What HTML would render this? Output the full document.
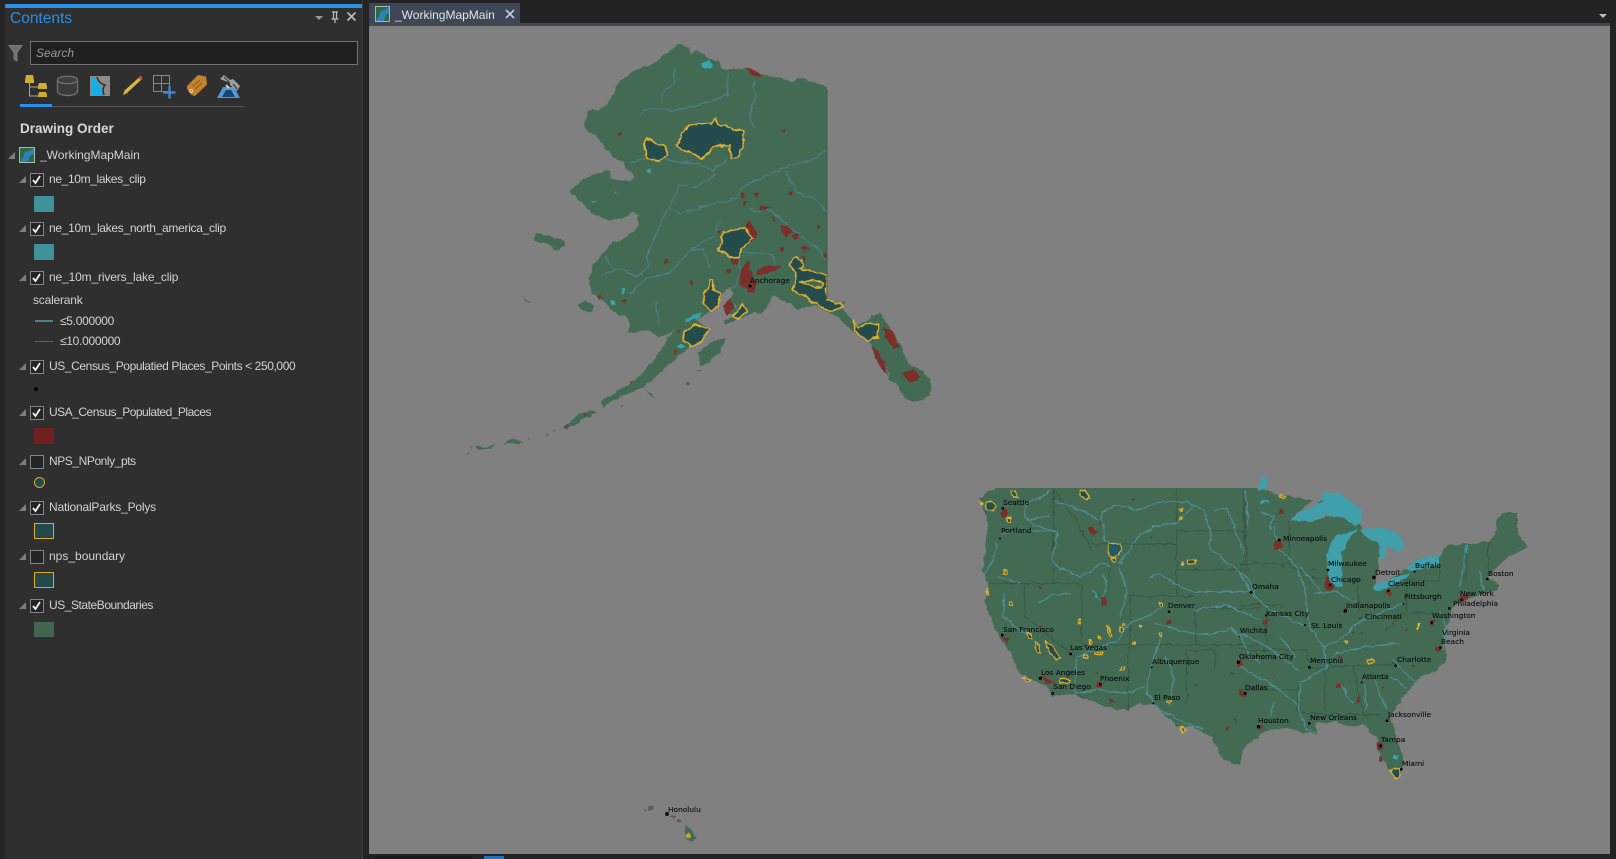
<!DOCTYPE html>
<html lang="en"><head><meta charset="utf-8"><title>_WorkingMapMain</title>
<style>
html,body{margin:0;padding:0;background:#222}
body{width:1616px;height:859px;position:relative;overflow:hidden;font-family:"Liberation Sans",sans-serif;color:#d8d8d8}
.a{position:absolute}
.t{position:absolute;font-size:12px;line-height:16px;white-space:nowrap;color:#d2d2d2}
.cb{position:absolute;left:30px;width:12px;height:12px;border:1px solid #858585;background:#242424}
.sw{position:absolute;left:34px;width:20px;height:16px}
.tri{position:absolute;width:0;height:0;border-style:solid;border-width:0 0 7px 7px;border-color:transparent transparent #7e7e7e transparent}
#map text{font-family:"DejaVu Sans","Liberation Sans",sans-serif;font-size:7.4px;fill:#0c0c0c;stroke:#0c0c0c;stroke-width:.12}
</style></head><body>
<div class="a" style="left:0;top:0;width:5px;height:859px;background:#242424"></div>
<div class="a" style="left:5px;top:0;width:357px;height:859px;background:#2f2f2f"></div>
<div class="a" style="left:5px;top:0;width:357px;height:4px;background:#232323"></div>
<div class="a" style="left:5px;top:4px;width:357px;height:4px;background:#2a8fe6"></div>
<div class="a" style="left:362px;top:0;width:1px;height:859px;background:#3c3c3c"></div>
<div class="a" style="left:10px;top:9px;font-size:15.500px;line-height:20px;color:#2b8ee2">Contents</div>
<svg class="a" style="left:0;top:0" width="362" height="110" viewBox="0 0 362 110">
<path d="M315,16h8l-4,4z" fill="#9a9a9a"/>
<path d="M332,12h6M333.500,12v7h3v-7M331.500,19h7M335,19v4" stroke="#c0c0c0" stroke-width="1.200" fill="none"/>
<path d="M347.500,12.500l8,8M355.500,12.500l-8,8" stroke="#bdbdbd" stroke-width="1.600"/>
<path d="M9,45.500h13l-5,7v8.500l-3-2v-6.500z" fill="#6e6e6e" stroke="#8a8a8a" stroke-width=".8"/>
<circle cx="331" cy="51" r="3.800" fill="none" stroke="#c4c4c4" stroke-width="1.500"/>
<path d="M328.500,54l-3.500,4" stroke="#c4c4c4" stroke-width="2"/>
<path d="M346,51h4l-2,2.500z" fill="#5f5f5f"/>
<!-- tree -->
<path d="M29.500,83v13h8.500M29.500,87h8.500" stroke="#a5a5a5" fill="none"/>
<path d="M26,75h7l1,5v3h-9v-3z" fill="#d0ae2c"/>
<path d="M39,83h7l1,3v3h-9v-3z" fill="#d0ae2c"/>
<path d="M39,92h7l1,3v2h-9v-2z" fill="#d0ae2c"/>
<!-- db -->
<path d="M57.500,80v11c0,6 20,6 20,0v-11" fill="#3a3a3a" stroke="#6e6e6e" stroke-width="1.400"/>
<ellipse cx="67.500" cy="80" rx="10" ry="3.800" fill="#3f3f3f" stroke="#6e6e6e" stroke-width="1.400"/>
<!-- map -->
<rect x="90" y="76" width="20" height="20" fill="#8a8a8a"/>
<path d="M91,77h4l4,7 2,4 2,7h-12z" fill="#12b0ea"/>
<path d="M97,77c1,4 4,7 8,8 -3,3 -2,7 -1,10" fill="none" stroke="#2e2e2e" stroke-width="1.500"/>
<!-- pencil -->
<path d="M123,95l1.500-4.500 15-13.500 2,2.500-15,14z" fill="#d9b53a"/>
<circle cx="140.500" cy="78" r="1.800" fill="#c8553e"/>
<!-- grid -->
<path d="M153.500,75.500h16v16h-16zM161.500,75.500v16M153.500,83.500h16" fill="none" stroke="#8a8a8a"/>
<path d="M163,92.500h12.500M169.500,86v12.500" stroke="#3f86cf" stroke-width="2.400"/>
<!-- tag -->
<path d="M187,86l11-11 8,1.500 1,8-12,11.500-3.500-1-4.500-6z" fill="#c4812e"/>
<path d="M193,86l7-6M195,89l7-6" stroke="#96601f" stroke-width="1.200"/>
<circle cx="191" cy="91" r="1.500" fill="none" stroke="#edd4a8"/>
<!-- satellite -->
<path d="M217,98l6-11h11l6,11z" fill="#4f9bd8"/>
<path d="M222,97l4-7h5l4,7z" fill="#16466f"/>
<path d="M220,79l4-4 6,5 3-1 7,7-3,5-7-6 0-2z" fill="#a0a0a0"/>
<path d="M224,77l6,6M233,84l4,5" stroke="#4a4a4a" stroke-width="1.500"/>
<path d="M226,85l3,3" stroke="#cfcfcf" stroke-width="2"/>
<!-- underline -->
<path d="M20,106.500H244" stroke="#5a5a5a"/>
<rect x="20" y="104" width="32" height="3" fill="#2a8fe6"/>
</svg>
<div class="a" style="left:30px;top:41px;width:326px;height:22px;background:#202020;border:1px solid #737373"></div>
<div class="a" style="left:36px;top:45px;font-size:12px;line-height:16px;font-style:italic;color:#9c9c9c">Search</div>
<div class="a" style="left:20px;top:120px;font-size:13.500px;line-height:17px;font-weight:bold;color:#d8d8d8">Drawing Order</div>

<div class="tri" style="left:8px;top:152px"></div>
<svg class="a" style="left:19px;top:147px" width="16" height="16"><rect x=".5" y=".5" width="15" height="15" fill="#2a6a45" stroke="#a8b8a8"/><path d="M1,15l3-5 2-5 4-1 5-3v6l-4,2-2,6z" fill="#2f7fb8"/></svg>
<div class="t" style="left:40px;top:147px">_WorkingMapMain</div>

<div class="tri" style="left:19px;top:176px"></div><div class="cb" style="top:173px"></div><div class="t" style="left:49px;top:171px;letter-spacing:-.36px">ne_10m_lakes_clip</div>
<div class="sw" style="top:196px;background:#3f929a"></div>
<div class="tri" style="left:19px;top:225px"></div><div class="cb" style="top:222px"></div><div class="t" style="left:49px;top:220px;letter-spacing:-.3px">ne_10m_lakes_north_america_clip</div>
<div class="sw" style="top:244px;background:#3f929a"></div>
<div class="tri" style="left:19px;top:274px"></div><div class="cb" style="top:271px"></div><div class="t" style="left:49px;top:269px;letter-spacing:-.15px">ne_10m_rivers_lake_clip</div>
<div class="t" style="left:33px;top:292px;letter-spacing:-.2px">scalerank</div>
<div class="a" style="left:35px;top:320px;width:18px;height:2px;background:#4a7f88"></div><div class="t" style="left:60px;top:313px;letter-spacing:-.3px">≤5.000000</div>
<div class="a" style="left:35px;top:341px;width:18px;height:1px;background:#4d6d68"></div><div class="t" style="left:60px;top:333px;letter-spacing:-.3px">≤10.000000</div>
<div class="tri" style="left:19px;top:363px"></div><div class="cb" style="top:360px"></div><div class="t" style="left:49px;top:358px;letter-spacing:-.4px">US_Census_Populatied Places_Points &lt; 250,000</div>
<div class="a" style="left:34px;top:387px;width:4px;height:4px;border-radius:50%;background:#000"></div>
<div class="tri" style="left:19px;top:409px"></div><div class="cb" style="top:406px"></div><div class="t" style="left:49px;top:404px;letter-spacing:-.5px">USA_Census_Populated_Places</div>
<div class="sw" style="top:428px;background:#721f1f"></div>
<div class="tri" style="left:19px;top:458px"></div><div class="cb" style="top:455px"></div><div class="t" style="left:49px;top:453px;letter-spacing:-.43px">NPS_NPonly_pts</div>
<div class="a" style="left:34px;top:477px;width:9px;height:9px;border-radius:50%;background:#24494b;border:1.500px solid #d6a52f"></div>
<div class="tri" style="left:19px;top:504px"></div><div class="cb" style="top:501px"></div><div class="t" style="left:49px;top:499px;letter-spacing:-.2px">NationalParks_Polys</div>
<div class="sw" style="top:523px;width:18px;height:14px;background:#24494b;border:1px solid #dba92c"></div>
<div class="tri" style="left:19px;top:553px"></div><div class="cb" style="top:550px"></div><div class="t" style="left:49px;top:548px">nps_boundary</div>
<div class="sw" style="top:572px;width:18px;height:14px;background:#24494b;border:1px solid #dba92c"></div>
<div class="tri" style="left:19px;top:602px"></div><div class="cb" style="top:599px"></div><div class="t" style="left:49px;top:597px;letter-spacing:-.45px">US_StateBoundaries</div>
<div class="sw" style="top:622px;height:15px;background:#41654f"></div>
<svg class="a" style="left:0;top:0" width="60" height="620"><g fill="none" stroke="#f2f2f2" stroke-width="1.800">
<path d="M33,180l2.500,3 4.500-7"/><path d="M33,229l2.500,3 4.500-7"/><path d="M33,278l2.500,3 4.500-7"/><path d="M33,367l2.500,3 4.500-7"/><path d="M33,413l2.500,3 4.500-7"/><path d="M33,508l2.500,3 4.500-7"/><path d="M33,606l2.500,3 4.500-7"/></g></svg>

<!-- top tabs -->
<div class="a" style="left:363px;top:0;width:1253px;height:859px;background:#232323"></div>
<div class="a" style="left:369px;top:3px;width:151px;height:21px;background:#3e4757"></div>
<svg class="a" style="left:375px;top:6px" width="15" height="16"><rect x=".5" y=".5" width="14" height="15" fill="#2a6a45" stroke="#a8b8a8"/><path d="M1,15l3-5 2-5 4-1 4-3v6l-3,2-2,6z" fill="#2f7fb8"/></svg>
<div class="a" style="left:395px;top:7px;font-size:12px;line-height:16px;color:#e4e4e4">_WorkingMapMain</div>
<svg class="a" style="left:505px;top:9px" width="10" height="10"><path d="M1,1l8,8M9,1l-8,8" stroke="#c8cbd0" stroke-width="1.600"/></svg>
<div class="a" style="left:369px;top:23px;width:1241px;height:3px;background:#45474c"></div>
<svg class="a" style="left:1598px;top:12px" width="10" height="8"><path d="M1,2h8l-4,4z" fill="#bdbdbd"/></svg>
<div class="a" style="left:375px;top:856px;width:97px;height:3px;background:#1a1a1a"></div>
<div class="a" style="left:484px;top:856px;width:20px;height:3px;background:#2273bf"></div>

<!-- MAP -->
<svg id="map" class="a" style="left:369px;top:26px;filter:blur(.35px)" width="1241" height="828" viewBox="369 26 1241 828">
<defs>
<filter id="r" filterUnits="userSpaceOnUse" x="369" y="26" width="1241" height="828" color-interpolation-filters="sRGB">
<feTurbulence type="fractalNoise" baseFrequency=".13" numOctaves="3" seed="4"/>
<feDisplacementMap in="SourceGraphic" scale="5" xChannelSelector="R" yChannelSelector="G"/>
</filter>
</defs>
<rect x="369" y="26" width="1241" height="828" fill="#808080"/>

<g filter="url(#r)">
<!-- ALASKA -->
<g transform="translate(450,30) scale(.33333)">
<path fill="#436a53" d="M685,42L715,52 722,72 745,62 775,85 808,95 815,118 855,118 890,112 935,130 985,145 1025,155 1050,145 1085,155 1145,175L1145,810 1185,818 1178,840 1200,860 1215,885 1260,870 1265,855 1290,850 1310,880 1345,930 1375,1000 1420,1025 1442,1050 1440,1100 1415,1112 1390,1115 1365,1105 1340,1060 1315,1045 1310,1010 1280,990 1255,935 1215,910 1190,885 1165,860 1130,845 1090,825 1040,840 1025,825 1000,815 975,795 960,815 935,850 900,850 880,865 850,875 820,880 822,868 850,860 835,845 830,820 850,790 840,770 815,790 800,825 770,850 735,870 780,895 760,930 720,950 690,975 650,1010 610,1050 570,1075 510,1100 460,1130 450,1115 500,1085 550,1055 590,1015 625,975 655,920 680,895 640,920 620,920 600,900 560,905 535,910 540,880 525,860 490,845 460,815 425,790 418,740 425,715 455,670 490,640 525,625 565,590 565,555 550,545 520,565 480,570 430,550 395,520 360,485 400,450 450,425 485,420 485,450 540,450 555,440 530,420 520,395 490,380 470,360 440,320 400,290 415,245 460,235 490,195 510,150 570,115 610,100 650,70Z"/>
<g fill="#436a53">
<path d="M255,610L290,615 345,635 345,650 320,660 285,640 255,630Z"/>
<path d="M380,825L410,812 432,825 425,845 395,840Z"/>
<path d="M745,965L790,935 825,925 810,965 775,1000 750,1005Z"/>
<path d="M340,1195L390,1150 420,1140 440,1145 400,1170 350,1200Z"/>
<path d="M75,1248l30,4 35-10-20,12-35,6zM160,1240l30-15 30,15-30,2zM235,1228l8-3-3,6zM285,1215l12-6-4,7zM305,1205l12-10-4,10zM50,1270l8-4-3,8zM58,1250l6,0-3,5z"/>
<path d="M215,795l14,14 15,8-14,-3z"/>
<path d="M710,1055h10v10h-10zM740,1025l15-5-5,8zM510,1125h10v4h-10zM590,1085l15,5 8,15-15-12z"/>
</g>
<g fill="none" stroke="#4a7d85" stroke-width="4" stroke-linejoin="round">
<path d="M1130,360L1070,395 1000,415 940,440 880,470 860,505 800,520 740,535 690,550 655,535 625,590 590,680 595,710 560,740 520,720 490,720 455,735"/>
<path d="M1005,420L1040,485 1100,510 1130,545"/>
<path d="M580,245L600,235 690,240 780,215 830,195 835,130"/>
<path d="M910,150L915,200 900,260 910,295"/>
<path d="M635,220L635,190 670,165 675,110"/>
<path d="M540,395L620,380 680,395 740,400 790,420 830,390"/>
<path d="M660,530L690,465 740,470 800,430"/>
<path d="M540,790L590,745 660,730 720,660 790,620 810,575"/>
<path d="M720,660L760,655 780,715"/>
<path d="M880,665L970,675 975,710"/>
<path d="M900,540L960,540 1030,600 1110,660 1125,690"/>
<path d="M870,690L870,745 840,780"/>
<path d="M465,680L490,720M620,815L625,880"/>
</g>
<g fill="#7a3029">
<path d="M885,112L925,125 935,140 905,135Z"/>
<path d="M870,720L895,690 905,735 920,760 910,790 890,785 870,760Z"/>
<path d="M885,595L895,572 915,600 925,610 905,640 895,620Z"/>
<path d="M840,685h30l-5,20-15-2zM825,715l20,5-5,10-15-5zM920,720l30-15 45,5-25,15-25,5-25,5zM925,530h35l-10,12-20-3zM1015,485h20l-5,12-15-2zM910,490h20l-10,12zM875,490h10v12h-12zM880,515h15l-10,12zM960,545l20,30-10-2zM990,590l25,-2 15,20-25,12zM1025,615l25,10-20,5zM990,650h12v14h-12zM1050,655l20-5-10,20zM1050,680l20,2-5,15zM1100,585h10v10h-10zM1120,670h10v14h-10zM995,298h12l-5,10zM505,305h10v10h-10zM800,605l15-5-5,12zM640,685h12v14h-10zM720,755h10v10h-10zM515,810h10v10zM440,800l15-2-5,12zM820,830l20-25 10,30-20,20zM670,960l12,5-10,10zM680,900h15l-8,12zM540,1055l15-5-10,10zM400,1150h12l-5,10zM340,1195l10-12 3,8zM1060,650h15v10h-15zM1030,610h15v10h-15z"/>
<path d="M1300,890L1325,900 1350,950 1335,960 1305,925Z"/>
<path d="M1265,950L1285,960 1305,1000 1312,1040 1285,1000Z"/>
<path d="M1355,1030L1390,1015 1412,1040 1380,1060Z"/>
</g>
<g fill="#3aa3b0">
<path d="M755,100l20-8 15,12-15,12-15-4zM705,870l25-15 30-7-25,20-25,6zM590,415h12v14h-12zM680,950l15-10 12,12-15,5zM480,810h12v14h-12zM515,775h8v15h-8zM495,485h6v6h-6zM425,515h12v6h-12zM850,815l10,15-5,6z"/>
</g>
<g fill="#254c4c" stroke="#d9ac33" stroke-width="5" stroke-linejoin="round">
<path d="M715,285L780,280 795,265 805,285 880,305 880,345 865,380 845,385 840,345 790,350 760,385 740,380 720,365 680,350 690,320Z"/>
<path d="M590,325L610,335 650,350 650,375 625,392 595,385 582,355Z"/>
<path d="M820,605L885,595 908,625 880,650 865,680 835,680 808,660 815,625Z"/>
<path d="M1015,700L1040,680 1060,700 1050,715 1085,725 1130,735 1130,810 1175,820 1180,830 1140,845 1110,830 1060,795 1030,785 1040,730Z"/>
<path d="M780,748L790,748 792,780 810,790 805,825 785,845 760,820 758,790 778,775Z"/>
<path d="M700,905L735,885 780,895 755,935 725,950 700,930Z"/>
<path d="M1210,870L1225,895 1250,880 1285,885 1285,920 1255,935 1215,905Z"/>
<path d="M850,860L880,820 888,845 865,870Z"/>
<path d="M1050,755l40,-5 30,10-5,15-35-8z" fill="#436a53"/>
</g>
</g>

<!-- CONUS -->
<path fill="#436a53" d="M999,484L1240,484 1258,488 1275,493 1312,501 1290,520 1312,522 1335,515 1360,522 1362,530 1380,535 1378,570 1373,590 1405,570 1415,570 1440,558 1445,546 1465,544 1488,542 1495,535 1497,520 1505,512 1517,513 1518,533 1527,547 1513,555 1507,558 1495,570 1488,577 1498,585 1497,590 1473,597 1460,602 1453,607 1450,623 1443,630 1447,660 1437,670 1420,677 1403,697 1390,717 1403,757 1403,770 1395,778 1387,767 1378,750 1377,737 1363,725 1350,727 1337,722 1317,723 1317,735 1302,733 1288,727 1270,730 1253,740 1242,750 1240,765 1223,760 1212,737 1193,727 1177,727 1160,710 1153,703 1137,705 1128,709 1118,709 1075,695 1053,696 1047,687 1020,673 1010,653 997,633 984,603 988,583 983,570 988,527 980,498Z"/>
<g fill="#3f9fab">
<path d="M1290,520L1303,510 1322,502 1323,492 1335,493 1350,500 1360,508 1363,520 1357,526 1340,517 1327,515 1312,522Z"/>
<path d="M1328,548L1337,535 1357,530 1349,540 1342,553 1343,577 1342,585 1333,589 1329,580 1327,567Z"/>
<path d="M1360,530L1380,527 1398,533 1405,548 1396,552 1388,545 1384,560 1378,558 1380,544 1370,540Z"/>
<path d="M1372,587L1383,582 1410,572 1407,578 1390,587 1377,591Z"/>
<path d="M1407,567L1417,560 1440,555 1440,565 1430,568 1410,570Z"/>
<path d="M1259,482l5-8 4,8-4,3zM1263,501h6v2h-6z"/>
</g>

<!-- west group -->
<g transform="translate(960,460) scale(.33333)">
<g fill="none" stroke="#2f4b3c" stroke-width="2.200" opacity=".8">
<path d="M120,225L200,215 280,213M280,88V370M85,370H365M195,372V470L345,590M365,372V555M365,555H505M510,408V555M510,408H705M705,445V555M705,445H900M510,555H900M505,555V748M680,572V725M680,572H765V635M450,252V408M395,252H650M650,88V408M650,213H855M650,330H865M280,88L355,190 395,272"/>
<path d="M855,88V213L865,330M505,748H470L345,705"/>
</g>
<g fill="none" stroke="#4f8c93" stroke-width="4" stroke-linejoin="round">
<path d="M270,88L250,110 195,130 195,170 225,195 290,215 285,260 275,300 300,325 360,350 400,330 430,305 450,320"/>
<path d="M120,222L210,212 285,215"/>
<path d="M285,125L340,140 420,180"/>
<path d="M680,125L590,130 540,148 460,135 425,165 435,240 450,250"/>
<path d="M680,125L730,150 750,210 750,262 800,310 860,350 880,390 895,420"/>
<path d="M480,310L530,235 580,200 650,190 700,140"/>
<path d="M570,350L600,340 640,370 700,395 780,395 875,395"/>
<path d="M610,440L560,470 510,490 470,540 440,555 350,590 345,700"/>
<path d="M480,320L500,400 480,470"/>
<path d="M600,530L570,630 560,700 600,750 680,790 730,810"/>
<path d="M590,490L610,500 700,520 780,520 810,505 840,525 870,590 900,610"/>
<path d="M430,340L440,380 430,410"/>
<path d="M130,400L130,470 170,500 210,530"/>
<path d="M240,430L275,405 335,400M345,700L420,690 500,700 555,680M110,250L100,300 70,350M760,150L800,145 830,220 850,280M700,450L800,435 900,480M630,740L640,650 620,590M200,180L270,170M110,350L180,370"/>
</g>
<g fill="#7a3029">
<path d="M385,205l15-5 12,15-15,8-12-5zM120,150l18-5 5,18-15,10-8-10zM240,650l30,5 15,12-25,5zM125,525l20,10-5,20zM410,665h18v18h-18zM425,410h14v25h-14zM830,600h16v18h-16zM835,690l25,5-10,15zM445,712l20,12-15,4zM620,480h12v15h-12zM420,185h8v10h-8zM800,800l12,4-8,12zM820,775l12,4-4,12zM890,795h10v14h-10z"/>
<circle cx="520" cy="115" r="3"/><circle cx="270" cy="140" r="3"/><circle cx="300" cy="305" r="3"/><circle cx="575" cy="230" r="3"/><circle cx="710" cy="675" r="3"/><circle cx="410" cy="635" r="3"/><circle cx="820" cy="640" r="3"/><circle cx="240" cy="380" r="3"/>
</g>
<g fill="#3aa3b0"><path d="M395,385l15,15 12,22-15-12zM898,80h6v10h-6z"/></g>
<g fill="#254c4c" stroke="#d9ac33" stroke-width="4" stroke-linejoin="round">
<path d="M447,252h33l3,18-8,15-28,4Z" fill="#1f5a66"/>
<path d="M75,130l20-5 12,12-8,15-22-5Z"/>
<path d="M150,90l14,2 12,18-16,0-10-12ZM360,88l15,5 12,20-10,6-15-15ZM140,172h14v12h-12ZM255,545l25,15 22,35-12,8-22-25ZM225,550l12,6 8,22-18-2ZM200,515l15,5 3,18-12-2ZM300,655l30,3-8,12-25-2ZM130,330h10v12h-10ZM150,423h10v10h-10Z"/>
<path d="M62,120l6,12-4,3ZM452,292h14v14h-12ZM355,480h6v8h-6ZM440,500l6,4 8,24-6,2ZM480,503h10v14h-10ZM488,490h6v6h-6ZM540,495h6v6h-6ZM598,427h10v10h-10ZM600,520h8v10h-8ZM520,545h6v6h-6ZM483,620h10v10h-10ZM685,300l20-2-5,15-15-2ZM662,145h6v5h-6ZM660,170h8v6h-8ZM662,308h6v5h-6ZM390,540l6,10-8,4ZM415,530h6v6h-6ZM620,725l15,-3-5,10ZM665,805l12,3-8,14ZM185,655l30,1-12,8ZM78,385l6,20-5,2ZM370,585h15v6h-15ZM405,578h22v6h-22Z"/>
</g>
</g>

<!-- east group -->
<g transform="translate(1240,470) scale(.33333)">
<g fill="none" stroke="#2f4b3c" stroke-width="2.200" opacity=".8">
<path d="M0,280H140L215,320 250,325M0,405H130M0,540H200L210,595 300,590 390,585 470,580M80,405V540M145,150V280M10,55L15,280M0,660H170M255,600V720M170,720L175,640M340,590L370,730 415,735 170,730M440,480L490,430 600,430M500,330V425M350,320L360,420M600,260V330H490M680,225V340M745,215V310"/>
</g>
<g fill="none" stroke="#4f8c93" stroke-width="4" stroke-linejoin="round">
<path d="M100,170L120,240 170,290 190,350 210,470 250,530 260,590 180,640 175,720 200,780 235,790"/>
<path d="M250,530L300,510 350,460 420,430 490,400"/>
<path d="M0,310L35,370 90,420 190,465"/>
<path d="M260,590L290,550 380,530 480,520"/>
<path d="M0,490L80,530 175,600"/>
<path d="M0,590L90,640 170,700"/>
<path d="M225,370L290,365 350,400M680,225L660,350M600,420L620,480M450,620L500,650M60,125L100,140 90,180M15,60L25,170M300,640L340,700M400,620L440,720M370,640L380,720M100,700L90,740M620,480L610,540M530,640L460,570M180,290L240,360M720,300L730,360M120,500L170,560"/>
</g>
<g fill="#7a3029">
<path d="M100,220l18-15 12,22-15,12-15-4zM255,320l15,10 18,22-18,10-15-5zM655,385l40-15-15,18-25,5zM570,450h16l-4,18-12-6zM585,530h20v12h-20zM440,360h12v14h-12zM410,820h18v18h-18zM0,665h15v12h-15zM50,765h15v14h-15zM395,318h10v12h-10zM310,415h10v10h-10zM70,450h14v12h-14zM350,680h8v20h-8zM290,640h14v14h-14zM420,860h8v14h-8zM120,120h10v12h-10zM770,345h5v8h-5z"/>
<circle cx="130" cy="290" r="3"/><circle cx="220" cy="300" r="3"/><circle cx="340" cy="485" r="3"/><circle cx="365" cy="490" r="3"/><circle cx="430" cy="650" r="3"/><circle cx="100" cy="620" r="3"/><circle cx="300" cy="560" r="4"/><circle cx="500" cy="480" r="3"/><circle cx="55" cy="400" r="3"/><circle cx="490" cy="670" r="3"/><circle cx="520" cy="590" r="3"/><circle cx="245" cy="745" r="3"/><circle cx="830" cy="150" r="3"/>
</g>
<g fill="#3aa3b0"><path d="M55,35l15-15 12,30-20,12zM60,95h15v8h-15zM460,855h14v12h-14zM680,225h4v25h-4z"/></g>
<g fill="none" stroke="#d9ac33" stroke-width="4" stroke-linejoin="round">
<path d="M118,72l20,8-4,5-16-6zM380,572l20-5 5,8-22,6zM312,515h8v6h-8z"/>
<path d="M452,900l25-5 8,20-18,12Z" fill="#254c4c"/>
</g>
<path d="M530,478l10-18" stroke="#e0c030" stroke-width="6"/>
<path d="M235,100l15-8" stroke="#2d5a50" stroke-width="3"/>
</g>

<!-- Hawaii -->
<g fill="#5c5c5c">
<circle cx="651" cy="808" r="2.500"/><circle cx="645.500" cy="809.500" r="1"/>
<ellipse cx="673" cy="817" rx="3" ry="1"/><ellipse cx="680" cy="821" rx="2.500" ry="1.500"/>
</g>
<path d="M685,826l8,5 4,6-6,6-5-5z" fill="#436a53"/>
<circle cx="689" cy="836" r="2.500" fill="#c9a72c"/>
</g>

<!-- straight edges kept crisp over the roughened land -->
<rect x="827" y="60" width="120" height="239" fill="#808080"/>
<path d="M827,90V299" stroke="#38563f" stroke-width=".8"/>
<rect x="960" y="440" width="297" height="48" fill="#808080"/>

<!-- city dots -->
<g transform="translate(960,460) scale(.33333)" fill="#000">
<circle cx="128" cy="145" r="4"/><circle cx="120" cy="235" r="3"/><circle cx="127" cy="525" r="4"/><circle cx="332" cy="582" r="4"/><circle cx="241" cy="655" r="5"/><circle cx="278" cy="700" r="4"/><circle cx="421" cy="673" r="4"/><circle cx="575" cy="622" r="3"/><circle cx="580" cy="730" r="3"/><circle cx="627" cy="455" r="4"/><circle cx="873" cy="397" r="4"/><circle cx="838" cy="530" r="2"/><circle cx="835" cy="607" r="5"/><circle cx="856" cy="700" r="4"/><circle cx="895" cy="800" r="4"/>
</g>
<g transform="translate(1240,470) scale(.33333)" fill="#000">
<circle cx="118" cy="210" r="4"/><circle cx="264" cy="300" r="4"/><circle cx="270" cy="345" r="4"/><circle cx="33" cy="367" r="4"/><circle cx="78" cy="437" r="3"/><circle cx="195" cy="465" r="3"/><circle cx="316" cy="423" r="5"/><circle cx="360" cy="445" r="2"/><circle cx="402" cy="322" r="5"/><circle cx="445" cy="362" r="4"/><circle cx="524" cy="305" r="3"/><circle cx="490" cy="402" r="3"/><circle cx="628" cy="415" r="4"/><circle cx="665" cy="390" r="4"/><circle cx="742" cy="327" r="4"/><circle cx="575" cy="458" r="4"/><circle cx="601" cy="533" r="4"/><circle cx="467" cy="587" r="4"/><circle cx="365" cy="637" r="3"/><circle cx="208" cy="592" r="4"/><circle cx="208" cy="760" r="4"/><circle cx="55" cy="770" r="5"/><circle cx="15" cy="670" r="4"/><circle cx="441" cy="752" r="4"/><circle cx="421" cy="828" r="5"/><circle cx="484" cy="898" r="4"/>
</g>
<circle cx="750" cy="286" r="1.500" fill="#000"/>
<circle cx="667" cy="814" r="2" fill="#111"/>

<g>
<text x="750" y="283">Anchorage</text>
<text x="1003" y="505">Seattle</text><text x="1001" y="533">Portland</text><text x="1003" y="632">San Francisco</text><text x="1070" y="650">Las Vegas</text><text x="1041" y="675">Los Angeles</text><text x="1053" y="689">San Diego</text><text x="1100" y="681">Phoenix</text><text x="1152" y="664">Albuquerque</text><text x="1154" y="700">El Paso</text><text x="1168" y="608">Denver</text><text x="1240" y="633">Wichita</text><text x="1239" y="659">Oklahoma City</text><text x="1245" y="690">Dallas</text><text x="1252" y="589">Omaha</text><text x="1266" y="616">Kansas City</text><text x="1283" y="541">Minneapolis</text><text x="1328" y="566">Milwaukee</text><text x="1331" y="582">Chicago</text><text x="1375" y="575">Detroit</text><text x="1388" y="586">Cleveland</text><text x="1415" y="568">Buffalo</text><text x="1404" y="599">Pittsburgh</text><text x="1346" y="608">Indianapolis</text><text x="1365" y="619">Cincinnati</text><text x="1311" y="628">St. Louis</text><text x="1432" y="618">Washington</text><text x="1453" y="606">Philadelphia</text><text x="1460" y="596">New York</text><text x="1488" y="576">Boston</text><text x="1442" y="635">Virginia</text><text x="1441" y="644">Beach</text><text x="1397" y="662">Charlotte</text><text x="1362" y="679">Atlanta</text><text x="1310" y="663">Memphis</text><text x="1310" y="720">New Orleans</text><text x="1258" y="723">Houston</text><text x="1388" y="717">Jacksonville</text><text x="1381" y="742">Tampa</text><text x="1402" y="766">Miami</text>
<text x="668" y="812">Honolulu</text>
</g>
</svg>
</body></html>
